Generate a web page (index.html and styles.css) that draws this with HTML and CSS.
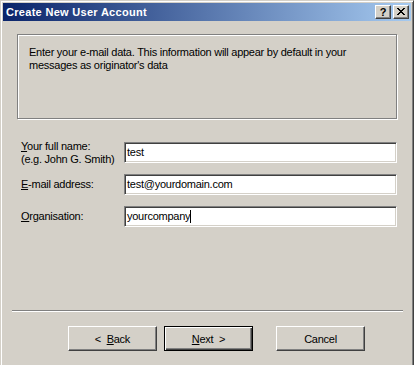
FILE: index.html
```html
<!DOCTYPE html>
<html lang="en">
<head>
<meta charset="utf-8">
<title>Create New User Account</title>
<link rel="stylesheet" href="styles.css">
</head>
<body>
<div class="window">
  <div class="titlebar">
    <span class="title">Create New User Account</span>
    <div class="tb-btns">
      <span class="tb-btn help">?</span>
      <span class="tb-btn close">
        <svg width="8" height="7" viewBox="0 0 8 7" shape-rendering="crispEdges">
          <path d="M0 0h2v1H0zM1 1h2v1H1zM2 2h4v1H2zM3 3h2v1H3zM2 4h4v1H2zM1 5h2v1H1zM0 6h2v1H0zM6 0h2v1H6zM5 1h2v1H5zM5 5h2v1H5zM6 6h2v1H6z" fill="#000"/>
        </svg>
      </span>
    </div>
  </div>

  <div class="group">
    <p class="intro">Enter your e-mail data. This information will appear by default in your<br>messages as originator's data</p>
  </div>

  <div class="form">
    <label class="lbl"><u>Y</u>our full name:<br>(e.g. John G. Smith)</label>
    <div class="field">test</div>
    <label class="lbl"><u>E</u>-mail address:</label>
    <div class="field">test@yourdomain.com</div>
    <label class="lbl"><u>O</u>rganisation:</label>
    <div class="field">yourcompany<span class="caret"></span></div>
  </div>

  <div class="sep"></div>

  <div class="buttons">
    <button class="btn back">&lt;&nbsp;&nbsp;<u>B</u>ack</button>
    <button class="btn next default"><u>N</u>ext&nbsp;&nbsp;&gt;</button>
    <button class="btn cancel">Cancel</button>
  </div>
</div>
</body>
</html>
```

FILE: styles.css
```css
html, body {
  margin: 0;
  padding: 0;
  height: 365px;
  overflow: hidden;
  background: #d4d0c8;
}

.window {
  box-sizing: border-box;
  width: 414px;
  height: 380px;
  padding: 2px;
  background: #d4d0c8;
  border: 1px solid;
  border-color: #d4d0c8 #404040 #404040 #d4d0c8;
  box-shadow: inset 1px 1px 0 #fff, inset -1px -1px 0 #808080;
  font-family: "Liberation Sans", Arial, sans-serif;
  font-size: 11px;
  letter-spacing: -0.25px;
  color: #000;
}

.titlebar {
  height: 18px;
  display: flex;
  align-items: center;
  justify-content: space-between;
  padding: 0 2px 0 3px;
  background: linear-gradient(to right, #0a246a, #a6caf0);
}

.title {
  color: #fff;
  font-weight: bold;
  font-size: 11px;
  letter-spacing: 0.3px;
  line-height: 18px;
}

.tb-btns {
  display: flex;
  gap: 2px;
}

.tb-btn {
  box-sizing: border-box;
  width: 16px;
  height: 14px;
  display: flex;
  align-items: center;
  justify-content: center;
  background: #d4d0c8;
  border: 1px solid;
  border-color: #fff #404040 #404040 #fff;
  box-shadow: inset -1px -1px 0 #808080;
}

.help {
  font-weight: bold;
  font-size: 11px;
  letter-spacing: 0;
  line-height: 12px;
  padding-bottom: 1px;
}

.close svg {
  display: block;
  margin-bottom: 1px;
}

.group {
  box-sizing: border-box;
  height: 85px;
  margin: 13px 14px 0 14px;
  padding: 11px 11px;
  border: 1px solid #808080;
  box-shadow: inset 1px 1px 0 #fff, 1px 1px 0 #fff;
}

.intro {
  margin: 0;
  line-height: 13px;
}

.form {
  display: grid;
  grid-template-columns: 103px 273px;
  grid-auto-rows: 21px;
  row-gap: 11px;
  align-items: center;
  margin: 23px 0 0 18px;
}

.lbl {
  line-height: 13px;
}

.field {
  box-sizing: border-box;
  height: 21px;
  padding: 0 2px;
  line-height: 18px;
  background: #fff;
  border: 1px solid;
  border-color: #808080 #fff #fff #808080;
  box-shadow: inset 1px 1px 0 #404040, inset -1px -1px 0 #d4d0c8;
  white-space: nowrap;
}

.caret {
  display: inline-block;
  width: 1px;
  height: 13px;
  background: #000;
  vertical-align: -3px;
}

.sep {
  height: 0;
  margin: 83px 8px 0 9px;
  border-top: 1px solid #808080;
  border-bottom: 1px solid #fff;
}

.buttons {
  display: flex;
  margin-top: 14px;
  padding-left: 65px;
}

.btn {
  box-sizing: border-box;
  width: 89px;
  height: 25px;
  padding: 0;
  margin: 0;
  font-family: "Liberation Sans", Arial, sans-serif;
  font-size: 11px;
  letter-spacing: -0.25px;
  color: #000;
  background: #d4d0c8;
  border: 1px solid;
  border-color: #fff #404040 #404040 #fff;
  box-shadow: inset -1px -1px 0 #808080;
}

.next {
  margin-left: 7px;
}

.cancel {
  margin-left: 23px;
}

.default {
  border: 1px solid #000;
  box-shadow: inset 1px 1px 0 #fff, inset -1px -1px 0 #404040, inset -2px -2px 0 #808080;
}
```
